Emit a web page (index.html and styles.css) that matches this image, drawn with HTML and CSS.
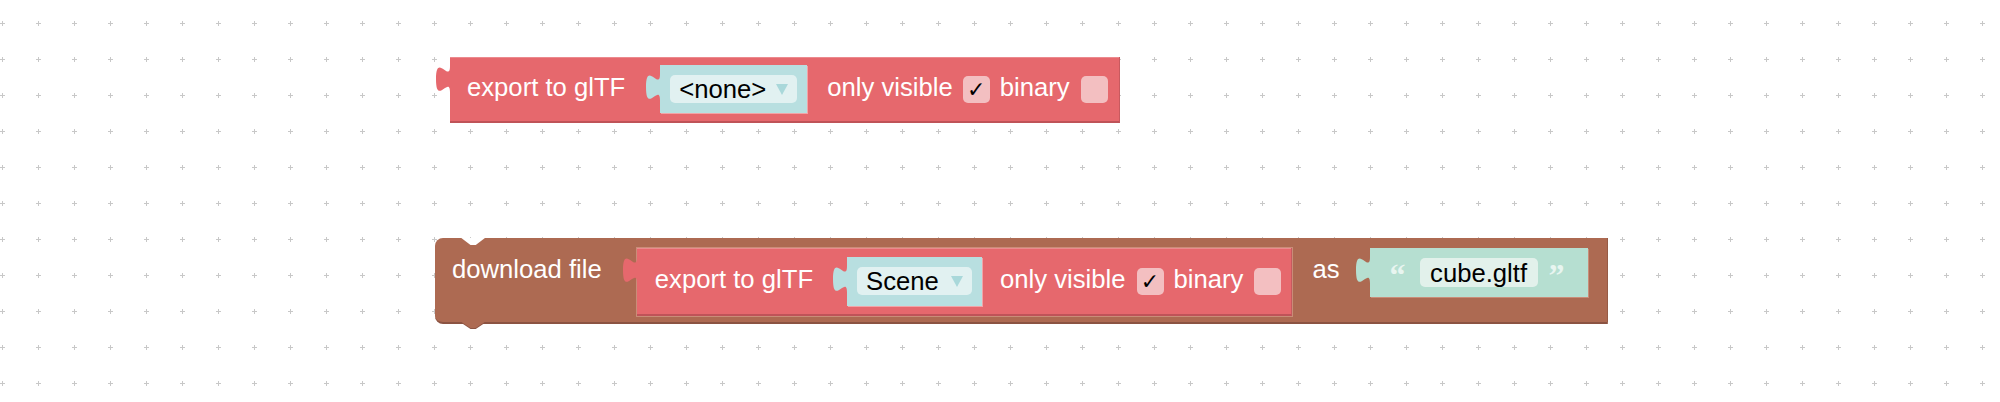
FILE: index.html
```html
<!DOCTYPE html>
<html>
<head>
<meta charset="utf-8">
<link rel="stylesheet" href="styles.css">
</head>
<body>
<div class="canvas">
  <svg class="grid" width="2000" height="402">
    <defs>
      <pattern id="g" x="-16" y="5" width="36" height="36" patternUnits="userSpaceOnUse">
        <rect x="16" y="18" width="5" height="1" fill="#c8c8c8"/>
        <rect x="18" y="16" width="1" height="5" fill="#c8c8c8"/>
      </pattern>
    </defs>
    <rect width="2000" height="402" fill="url(#g)"/>
  </svg>

  <div class="block red b1">
    <svg class="tab" viewBox="0 0 15 27" width="15" height="27"><path class="tab-red" d="M15,0 L14,0 c 0,17.5 -14,-14 -14,13.125 s 14,-4.375 14,13.125 L15,26.25 Z"/></svg>
    <span class="label">export to glTF</span>
    <div class="input dd dd1">
      <svg class="tab" viewBox="0 0 15 27" width="15" height="27"><path class="tab-teal" d="M15,0 L14,0 c 0,17.5 -14,-14 -14,13.125 s 14,-4.375 14,13.125 L15,26.25 Z"/></svg>
      <div class="field"><span>&lt;none&gt;</span><span class="arrow"></span></div>
    </div>
    <span class="label m20">only visible</span>
    <span class="check m10">✓</span>
    <span class="label m10">binary</span>
    <span class="check m11"></span>
  </div>

  <div class="block brown b2">
    <svg class="notch" viewBox="0 0 27 8" width="27" height="8"><polygon points="0,-1 10.5,7 15.75,7 26.25,-1" fill="#ffffff"/></svg>
    <svg class="nexttab" viewBox="0 0 27 9" width="27" height="9"><polygon points="0,0 10.5,7 15.75,7 26.25,0" fill="#8b5342"/><polygon points="0,-1 10.5,6 15.75,6 26.25,-1" fill="#ad6a52"/></svg>
    <span class="label top">download file</span>
    <div class="inner red">
      <svg class="tab" viewBox="0 0 15 27" width="15" height="27"><path class="tab-red" d="M15,0 L14,0 c 0,17.5 -14,-14 -14,13.125 s 14,-4.375 14,13.125 L15,26.25 Z"/></svg>
      <span class="label">export to glTF</span>
      <div class="input dd dd2">
        <svg class="tab" viewBox="0 0 15 27" width="15" height="27"><path class="tab-teal" d="M15,0 L14,0 c 0,17.5 -14,-14 -14,13.125 s 14,-4.375 14,13.125 L15,26.25 Z"/></svg>
        <div class="field"><span>Scene</span><span class="arrow"></span></div>
      </div>
      <span class="label m17">only visible</span>
      <span class="check m11">✓</span>
      <span class="label m10">binary</span>
      <span class="check m11"></span>
    </div>
    <span class="label top m20">as</span>
    <div class="input txt">
      <svg class="tab" viewBox="0 0 15 27" width="15" height="27"><path class="tab-mint" d="M15,0 L14,0 c 0,17.5 -14,-14 -14,13.125 s 14,-4.375 14,13.125 L15,26.25 Z"/></svg>
      <span class="quote q-open">“</span>
      <div class="field"><span>cube.gltf</span></div>
      <span class="quote q-close">”</span>
    </div>
  </div>
</div>
</body>
</html>
```

FILE: styles.css
```css
body {
  margin: 0;
  background: #ffffff;
}

.canvas {
  position: relative;
  width: 2000px;
  height: 402px;
  overflow: hidden;
  font-family: "Liberation Sans", Arial, sans-serif;
}

.grid {
  position: absolute;
  left: 0;
  top: 0;
}

.block {
  position: absolute;
  display: flex;
  box-sizing: border-box;
}

.red {
  background: #e6686d;
  border-bottom: 2px solid #bf5358;
  border-right: 1px solid #c85a5f;
  box-shadow: inset 0 1px 0 #ec8a8e;
}

.brown {
  background: #ad6a52;
  border-bottom: 2px solid #8b5342;
  border-right: 1px solid #965b46;
}

.b1 {
  left: 450px;
  top: 57px;
  height: 66px;
  align-items: center;
  padding: 0 11px 0 17px;
}

.b2 {
  left: 435px;
  top: 238px;
  height: 86px;
  align-items: flex-start;
  padding: 10px 19px 0 17px;
  border-radius: 8px 0 0 8px;
}

.inner {
  position: relative;
  display: flex;
  align-items: center;
  box-sizing: border-box;
  height: 68px;
  margin-left: 35px;
  padding: 0 10px 0 18px;
  outline: 1px solid #c98d78;
  outline-offset: 0;
}

.label {
  color: #ffffff;
  font-size: 25.67px;
  line-height: 30px;
  padding-bottom: 4px;
  white-space: nowrap;
}

.label.top {
  margin-top: 6px;
}

.m10 { margin-left: 10px; }
.m11 { margin-left: 11px; }
.m17 { margin-left: 18px; }
.m20 { margin-left: 20px; }

.tab {
  position: absolute;
  left: -14px;
  top: 9px;
  display: block;
}

.tab-red { fill: #e6686d; }
.tab-teal { fill: #b8dfe0; }
.tab-mint { fill: #b6dfd1; }

.notch {
  position: absolute;
  left: 25px;
  top: 0;
  display: block;
}

.nexttab {
  position: absolute;
  left: 25px;
  top: 100%;
  display: block;
}

.input {
  position: relative;
  display: flex;
  align-items: center;
  box-sizing: border-box;
  height: 48px;
}

.dd {
  background: #b8dfe0;
  padding: 0 10px;
  box-shadow: 1px 1px 0 #f2a4a7;
}

.dd1 { margin-left: 35px; width: 147px; }
.dd2 { margin-left: 34px; height: 49px; width: 135px; }

.field {
  display: flex;
  align-items: center;
  box-sizing: border-box;
  height: 28px;
  padding: 0 9px;
  border-radius: 5px;
  font-size: 25.67px;
  line-height: 28px;
  color: #000000;
  white-space: nowrap;
}

.dd .field {
  background: #e1f1f1;
  flex: 1;
}

.arrow {
  width: 0;
  height: 0;
  margin-left: auto;
  border-left: 6.5px solid transparent;
  border-right: 6.5px solid transparent;
  border-top: 11px solid #a9d8da;
}

.check {
  display: flex;
  align-items: center;
  justify-content: center;
  width: 27px;
  height: 27px;
  border-radius: 5px;
  background: #f3bfc1;
  font-family: "DejaVu Sans", sans-serif;
  font-size: 22px;
  line-height: 27px;
  color: #000000;
}

.txt {
  background: #b6dfd1;
  height: 49px;
  margin-left: 30px;
  padding: 0 22px 0 20px;
  box-shadow: 1px 1px 0 #c98d78;
}

.txt .field {
  background: #e2f1eb;
  height: 29px;
  width: 118px;
  justify-content: center;
  margin: 0 10px 0 17px;
}

.quote {
  font-family: "Liberation Serif", "Times New Roman", serif;
  font-weight: bold;
  font-size: 32px;
  line-height: 28px;
  color: #e8f5f0;
  width: 13px;
  align-self: flex-start;
  margin-top: 13px;
  white-space: nowrap;
}

.q-close {
  width: 17px;
  padding-left: 1px;
}
```
